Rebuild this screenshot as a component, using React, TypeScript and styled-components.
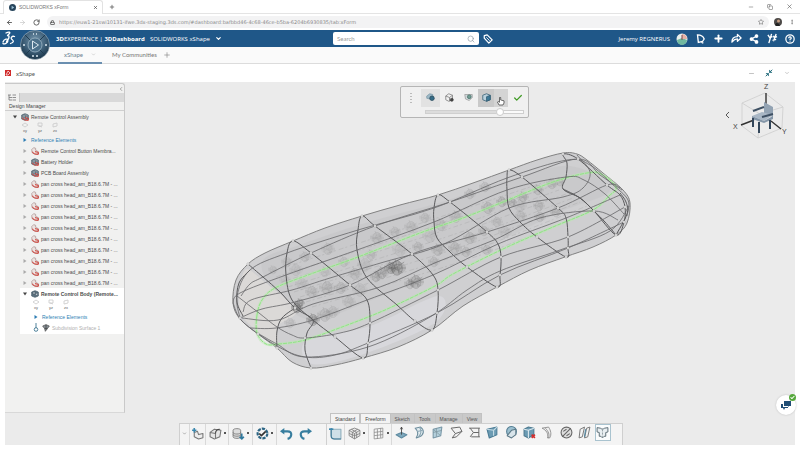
import React from 'react';
import styled, { createGlobalStyle, css } from 'styled-components';
import {
  ArrowLeft, ArrowRight, RotateCw, Lock, X, Plus, Minus, Star, Copy, MoreVertical, ChevronDown,
  ChevronLeft, Search, Share2, CircleHelp, Check, Minimize2,
} from 'lucide-react';

const ui = 'Lato, "Open Sans", sans-serif';
const arial = '"Liberation Sans", Arial, sans-serif';

const Global = createGlobalStyle`
  *, *::before, *::after { box-sizing: border-box; }
  html, body { margin: 0; padding: 0; }
  body { background: #fff; font-family: ${arial}; color: #555; overflow: hidden; }
  button, input { font: inherit; color: inherit; margin: 0; padding: 0; border: 0; background: none; outline: none; }
  svg { display: block; flex: none; }
`;

const Page = styled.div`
  min-height: 100vh;
  display: flex;
  flex-direction: column;
`;

/* ---------- browser frame ---------- */
const TabStrip = styled.div`
  height: 14px;
  display: flex;
  align-items: center;
  background: #fff;
  border-bottom: 1px solid #e4e4e4;
  padding-left: 3px;
`;
const BrowserTab = styled.div`
  width: 100px;
  height: 14px;
  display: flex;
  align-items: center;
  gap: 3px;
  padding: 0 4px 0 5px;
  background: #fff;
  border: 1px solid #e2e2e2;
  border-bottom: 0;
  border-radius: 3px 3px 0 0;
  font-size: 5px;
  color: #777;
`;
const TabTitle = styled.span`
  flex: 1;
  white-space: nowrap;
`;
const IconButton = styled.button<{ $w?: number; $color?: string }>`
  display: flex;
  align-items: center;
  justify-content: center;
  flex: none;
  width: ${p => p.$w ?? 12}px;
  height: 12px;
  color: ${p => p.$color ?? '#555'};
`;
const WindowButtons = styled.div`
  margin-left: auto;
  display: flex;
  gap: 7px;
  padding-right: 5px;
`;
const AddressRow = styled.div`
  height: 16px;
  display: flex;
  align-items: center;
  padding: 0 3px;
  background: #fff;
`;
const AddressBox = styled.label`
  flex: 1;
  height: 12px;
  display: flex;
  align-items: center;
  gap: 4px;
  padding: 0 5px 0 3px;
  margin-left: 4px;
  border-radius: 6px;
  background: #f3f3f4;
  color: #555;
`;
const AddressInput = styled.input`
  flex: 1;
  font-family: "DejaVu Sans", sans-serif;
  font-size: 5px;
  height: 12px;
  color: #8a8a8a;
`;

/* ---------- platform header ---------- */
const Header = styled.header`
  position: relative;
  height: 17px;
  display: grid;
  grid-template-columns: 1fr 146px 1fr;
  align-items: center;
  padding: 0 4px 0 16px;
  background: #1f5788;
  color: #fff;
  font-family: ${ui};
`;
const BrandLogo = styled.div`
  position: absolute;
  left: 2px;
  top: 1px;
`;
const Compass = styled.button`
  position: absolute;
  left: 20px;
  top: 0;
  z-index: 2;
`;
const Brand = styled.div`
  display: flex;
  align-items: center;
  gap: 5px;
  padding-left: 40px;
  font-family: "Open Sans", sans-serif;
  font-size: 6px;
  font-weight: 500;
  white-space: nowrap;
`;
const SearchBox = styled.label`
  height: 13px;
  display: flex;
  align-items: center;
  padding: 0 4px;
  border-radius: 2px;
  background: #fff;
  color: #8d9aa5;
`;
const SearchInput = styled.input`
  flex: 1;
  min-width: 0;
  font-size: 6px;
  &::placeholder { color: #999; opacity: 1; }
`;
const HeaderRight = styled.div`
  display: flex;
  align-items: center;
  padding-left: 3px;
`;
const UserName = styled.span`
  margin-left: auto;
  margin-right: 6px;
  font-family: "Open Sans", sans-serif;
  font-size: 6px;
  font-weight: 500;
  white-space: nowrap;
`;
const HeaderIcons = styled.div`
  display: flex;
  gap: 6px;
`;

const DashTabs = styled.nav`
  height: 17px;
  display: flex;
  align-items: center;
  padding-left: 58px;
  background: #fafafa;
  border-bottom: 1px solid #dcdcdc;
  font-family: ${ui};
  font-size: 6px;
`;
const DashTab = styled.a<{ $active?: boolean }>`
  height: 17px;
  display: flex;
  align-items: center;
  justify-content: space-between;
  width: ${p => (p.$active ? '44px' : 'auto')};
  padding: 0 6px;
  margin-right: ${p => (p.$active ? 4 : 0)}px;
  color: ${p => (p.$active ? '#6b7f90' : '#777')};
  text-decoration: none;
  white-space: nowrap;
  border-bottom: 2px solid ${p => (p.$active ? '#6a8fb0' : 'transparent')};
`;
const WidgetHeader = styled.div`
  height: 18px;
  display: flex;
  align-items: center;
  gap: 5px;
  padding: 0 7px 0 5px;
  font-family: ${ui};
  font-size: 6px;
  color: #555;
`;
const WidgetButtons = styled.div`
  display: flex;
  margin-left: auto;
  gap: 6px;
`;

/* ---------- workspace ---------- */
const Workspace = styled.main`
  position: relative;
  flex: 1;
  margin: 0 5px 5px;
  display: flex;
  flex-direction: column;
  background: #ebebeb;
  min-height: 363px;
`;
const Scene = styled.svg`
  position: absolute;
  inset: 0;
  width: 100%;
  height: 100%;
`;
const Panel = styled.aside`
  position: relative;
  flex: 1;
  width: 120px;
  margin-top: 1px;
  background: #f1f1f0;
  border: 1px solid #c9c9c9;
  border-left: 0;
  border-bottom-color: #d8d8d8;
  border-radius: 0 3px 0 0;
  font-size: 5px;
`;
const PanelTop = styled.div`
  height: 9px;
  display: flex;
  justify-content: flex-end;
  align-items: center;
`;
const PanelTabs = styled.div`
  height: 9px;
  display: flex;
  background: #d9d9d9;
`;
const PanelTab = styled.button`
  width: 15px;
  display: flex;
  align-items: center;
  justify-content: center;
  background: #f1f1f0;
  border-right: 1px solid #c6c6c6;
`;
const PanelTitle = styled.div`
  height: 9px;
  line-height: 8px;
  padding-left: 4px;
  border-bottom: 1px solid #cfcfcf;
  color: #444;
`;
const Tree = styled.div`
  display: flex;
  flex-direction: column;
`;
const Highlight = styled.div`
  margin-left: 15px;
  padding-bottom: 1px;
  background: #fff;
`;
const Row = styled.div<{ $indent: number; $tone?: 'link' | 'muted' | 'strong' }>`
  height: 11px;
  display: flex;
  align-items: center;
  gap: 2px;
  padding-left: ${p => p.$indent}px;
  color: #4c4c4c;
  ${p => p.$tone === 'link' && css`color: #2f7fb4;`}
  ${p => p.$tone === 'muted' && css`color: #b0b0b0;`}
  ${p => p.$tone === 'strong' && css`color: #4c4c4c; font-weight: bold;`}
`;
const Toggle = styled.button`
  width: 8px;
  height: 8px;
  flex: none;
  display: flex;
  align-items: center;
  justify-content: center;
`;
const RowLabel = styled.span`
  white-space: nowrap;
`;
const PlaneRow = styled.div<{ $indent: number }>`
  height: 12px;
  display: flex;
  align-items: center;
  gap: 5px;
  padding-left: ${p => p.$indent}px;
`;

/* ---------- floating view palette ---------- */
const Palette = styled.div`
  position: absolute;
  left: 50%;
  top: 4px;
  width: 129px;
  height: 32px;
  border: 1px solid #b5b5b5;
  border-radius: 2px;
  background: #f0f0f0;
`;
const PaletteRow = styled.div`
  height: 21px;
  display: flex;
  align-items: center;
  padding-left: 5px;
`;
const Grip = styled.span`
  display: flex;
  width: 15px;
`;
const PaletteButton = styled.button<{ $shade?: string; $w?: number }>`
  width: ${p => p.$w ?? 19}px;
  height: 18px;
  flex: none;
  display: flex;
  align-items: center;
  justify-content: center;
  background: ${p => p.$shade ?? 'transparent'};
`;
const Slider = styled.input`
  -webkit-appearance: none;
  appearance: none;
  display: block;
  width: 99px;
  height: 8px;
  margin-left: 24px;
  background: transparent;
  &::-webkit-slider-runnable-track {
    height: 4px;
    border: 1px solid #cfcfcf;
    background: linear-gradient(90deg, #dcdcdc 76%, #fafafa 76%);
  }
  &::-webkit-slider-thumb {
    -webkit-appearance: none;
    width: 8px;
    height: 8px;
    margin-top: -3px;
    border: 1px solid #ccc;
    border-radius: 50%;
    background: #fff;
  }
`;
const Pointer = styled.div`
  position: absolute;
  left: 96px;
  top: 9px;
`;

/* ---------- command dock ---------- */
const Dock = styled.footer`
  position: relative;
  height: 32px;
  padding-left: 174px;
`;
const DockTabs = styled.div`
  height: 10px;
  display: flex;
  padding-left: 151px;
`;
const DockTab = styled.button<{ $light?: boolean }>`
  height: 10px;
  padding: 0 4px;
  font-size: 5px;
  color: ${p => (p.$light ? '#444' : '#555')};
  background: ${p => (p.$light ? '#f3f3f3' : '#c9c9c9')};
  border: 1px solid #c2c2c2;
  border-left-width: ${p => (p.$light ? 1 : 0)}px;
  border-bottom: 0;
  white-space: nowrap;
`;
const DockRow = styled.div`
  height: 22px;
  display: flex;
  width: fit-content;
  padding-right: 10px;
  background: #f4f4f4;
  border: 1px solid #cfcfcf;
  border-bottom: 0;
`;
const Cell = styled.button<{ $w: number; $line?: boolean }>`
  width: ${p => p.$w}px;
  flex: none;
  display: flex;
  align-items: center;
  justify-content: center;
  gap: 2px;
  padding-bottom: 3px;
  border-right: ${p => (p.$line ? '1px solid #d9d9d9' : '0')};
`;
const MenuDot = styled.span`
  width: 2px;
  height: 2px;
  background: #555;
`;
const DockGap = styled.span`
  width: 12px;
  border-right: 1px solid #d0d0d0;
`;
const Commands = styled.div`
  flex: 0 0 220px;
  display: grid;
  grid-template-columns: repeat(12, 1fr);
`;
const Command = styled.button<{ $selected?: boolean }>`
  display: flex;
  align-items: center;
  justify-content: center;
  height: 17px;
  margin: 0 1px;
  border: ${p => (p.$selected ? '1px solid #a9c3cf' : '0')};
  background: ${p => (p.$selected ? '#fafcfd' : 'none')};
`;
const ChatButton = styled.button`
  position: absolute;
  right: -1px;
  bottom: 30px;
  width: 20px;
  height: 20px;
  display: flex;
  align-items: center;
  justify-content: center;
  border-radius: 50%;
  background: #fff;
  box-shadow: 0 0 2px #bbb;
`;
const ChatBadge = styled.span`
  position: absolute;
  right: 0;
  top: -1px;
  width: 7px;
  height: 7px;
  display: flex;
  align-items: center;
  justify-content: center;
  border-radius: 50%;
  background: #56a83c;
  color: #fff;
`;

/* ---------- model geometry ---------- */
type Pt = [number, number];

function spline(pts: Pt[], closed = false): string {
  const n = pts.length;
  const at = (i: number): Pt => (closed ? pts[(i + n) % n] : pts[Math.max(0, Math.min(n - 1, i))]);
  let d = `M${pts[0][0]} ${pts[0][1]}`;
  const last = closed ? n : n - 1;
  for (let i = 0; i < last; i++) {
    const [a, b, c, e] = [at(i - 1), at(i), at(i + 1), at(i + 2)];
    d += `C${b[0] + (c[0] - a[0]) / 6} ${b[1] + (c[1] - a[1]) / 6} ${c[0] - (e[0] - b[0]) / 6} ${c[1] - (e[1] - b[1]) / 6} ${c[0]} ${c[1]}`;
  }
  return closed ? d + 'Z' : d;
}

const outline: Pt[] = [
  [248, 264], [236, 280], [233, 303], [240, 319], [258, 334], [277, 348], [292, 362], [311, 368], [335, 365],
  [363, 358], [398, 347], [432, 330], [463, 306], [497, 287], [530, 270], [565, 257], [593, 247], [616, 235],
  [627, 223], [630, 203], [623, 190], [603, 173], [587, 160], [577, 154], [563, 153], [537, 160], [509, 170],
  [473, 183], [438, 195], [400, 205], [362, 216], [325, 228], [293, 241], [265, 253],
];

const rings: Pt[][] = [
  [[293, 241], [311, 253], [350, 285], [367, 300], [370, 323], [368, 343], [363, 358], [335, 337], [313, 320], [292, 300], [286, 275], [287, 253]],
  [[362, 216], [375, 226], [412, 254], [433, 275], [438, 290], [437, 313], [432, 330], [415, 321], [397, 305], [367, 278], [357, 250], [358, 230]],
  [[438, 195], [450, 202], [487, 232], [498, 244], [501, 257], [500, 275], [497, 287], [467, 267], [450, 252], [437, 238], [434, 222], [434, 208]],
  [[509, 170], [522, 177], [558, 208], [566, 218], [568, 237], [568, 248], [566, 257], [537, 237], [520, 222], [509, 208], [507, 190], [507, 178]],
  [[563, 154], [578, 159], [607, 185], [620, 195], [625, 207], [624, 222], [616, 235], [594, 211], [580, 198], [563, 189], [566, 177], [567, 163]],
];

const lengthwise: Pt[][] = [
  [[240, 318], [237, 296], [250, 270], [287, 253], [358, 230], [434, 208], [507, 178], [567, 160], [590, 165], [612, 184], [628, 200], [627, 216]],
  [[241, 296], [250, 284], [263, 277], [311, 253], [375, 226], [450, 202], [522, 177], [578, 159], [600, 175], [622, 190]],
  [[233, 303], [240, 293], [286, 275], [357, 250], [434, 222], [507, 190], [566, 177], [584, 180], [605, 194], [624, 214]],
  [[243, 312], [251, 300], [292, 290], [330, 278], [384, 262], [444, 244], [509, 208], [563, 197], [583, 188], [590, 172], [577, 155]],
  [[240, 318], [262, 309], [295, 302], [350, 285], [412, 254], [487, 232], [558, 208], [607, 185], [620, 188]],
  [[250, 328], [276, 328], [313, 320], [367, 300], [433, 275], [498, 244], [566, 218], [620, 195]],
  [[237, 296], [259, 313], [277, 327], [292, 335], [305, 338], [340, 333], [370, 323], [438, 290], [501, 257], [568, 237], [625, 207]],
  [[233, 303], [243, 322], [277, 346], [305, 357], [335, 355], [368, 343], [437, 313], [500, 275], [568, 248], [624, 222]],
  [[259, 334], [277, 344], [305, 357], [368, 347], [430, 317], [467, 290], [500, 271], [560, 250], [610, 231], [629, 206]],
  [[242, 318], [278, 320], [313, 304], [380, 287], [437, 262], [494, 240], [540, 218], [594, 211], [618, 220]],
];

const endLoops: Pt[][] = [
  [[248, 264], [263, 277], [280, 292], [295, 308], [313, 320], [307, 333], [305, 350], [311, 368]],
  [[295, 308], [282, 318], [277, 331], [277, 348]],
  [[250, 270], [239, 283], [237, 302], [243, 316]],
  [[563, 189], [580, 198], [594, 211], [605, 222], [616, 235]],
  [[620, 193], [626, 202], [627, 214], [616, 235]],
];

const greenLoop: Pt[] = [
  [257, 315], [257, 333], [266, 344], [279, 344], [305, 340], [342, 327], [385, 310], [435, 286], [453, 274],
  [503, 249], [553, 227], [593, 210], [609, 196], [616, 187], [601, 174], [587, 173], [553, 182], [503, 202],
  [463, 218], [420, 233], [358, 257], [308, 275], [275, 288], [262, 300],
];

const partSpots: [number, number, number, number][] = [
  [273, 270, 5, 0.2], [287, 262, 6, 0.2], [305, 257, 6, 0.25], [328, 249, 7, 0.25], [344, 262, 6, 0.25], [325, 272, 6, 0.2],
  [377, 238, 7, 0.3], [395, 232, 6, 0.25], [411, 227, 7, 0.25], [425, 218, 6, 0.25], [441, 225, 7, 0.3], [456, 217, 7, 0.3],
  [470, 194, 6, 0.3], [485, 187, 6, 0.3], [488, 208, 7, 0.4], [502, 202, 6, 0.45], [512, 202, 5, 0.4], [523, 197, 6, 0.4],
  [538, 190, 6, 0.35], [552, 184, 6, 0.35], [560, 182, 5, 0.3], [539, 206, 6, 0.3], [540, 217, 6, 0.3], [521, 216, 6, 0.25],
  [470, 238, 7, 0.35], [484, 231, 6, 0.3], [455, 248, 7, 0.35], [438, 250, 7, 0.35], [434, 262, 6, 0.3], [418, 247, 6, 0.3],
  [397, 268, 9, 0.9], [391, 268, 7, 0.7], [382, 273, 7, 0.5], [376, 277, 6, 0.4], [416, 282, 8, 0.65], [410, 284, 6, 0.4],
  [297, 308, 6, 0.9], [300, 303, 5, 0.6], [313, 320, 7, 0.7], [325, 315, 8, 0.35], [333, 312, 7, 0.25], [327, 288, 8, 0.35],
  [312, 292, 7, 0.3], [341, 288, 7, 0.3], [355, 274, 7, 0.3], [302, 284, 7, 0.2], [349, 302, 7, 0.25], [371, 255, 6, 0.25],
  [487, 250, 6, 0.3], [497, 222, 6, 0.25], [466, 252, 6, 0.3], [556, 212, 6, 0.3], [290, 323, 6, 0.25], [285, 280, 6, 0.15],
  [400, 250, 8, 0.2], [360, 290, 8, 0.2], [365, 265, 8, 0.2], [430, 236, 8, 0.2], [505, 232, 7, 0.2], [520, 206, 7, 0.2], [296, 270, 7, 0.2],
];

const Model = () => (
  <g fill="none">
    <path d={spline(outline, true)} fill="#cfcfd1" stroke="#777" strokeWidth="0.9" />
    <path d={spline([[262, 262], [300, 245], [362, 224], [438, 203], [509, 180], [570, 166], [610, 190], [560, 212], [498, 242], [433, 275], [367, 302], [313, 320], [280, 300]], true)} fill="#c4c4c6" opacity="0.55" />
    <path d={spline([[245, 270], [262, 280], [296, 310], [278, 326], [276, 344], [245, 320], [239, 300]], true)} fill="#dddbd8" opacity="0.8" />
    <path d={spline([[307, 340], [370, 326], [438, 296], [436, 322], [364, 354], [312, 364]], true)} fill="#d9d9de" opacity="0.8" />
    {partSpots.map(([x, y, r, o], i) => (
      <g key={i} stroke="#555" strokeWidth="0.5" opacity={o * 0.8}>
        <ellipse cx={x} cy={y} rx={r} ry={r * 0.7} fill="#808080" fillOpacity="0.35" stroke="none" />
        <ellipse cx={x} cy={y} rx={r * 0.6} ry={r * 0.8} fill="#808080" fillOpacity="0.3" />
        <ellipse cx={x + 1} cy={y - 1} rx={r * 0.4} ry={r * 0.3} />
        <path d={`M${x - r} ${y - 2}l${r * 1.6} ${r * 0.7}M${x - r * 0.7} ${y + 3}l${r * 1.5} ${-r}M${x - 2} ${y - r}l4 ${r * 1.6}M${x - r} ${y}h${r * 2}M${x + 2} ${y - r * 0.7}v${r * 1.3}`} />
      </g>
    ))}
    <g stroke="#888" strokeWidth="0.5" opacity="0.4">
      {[0, 1, 2, 3, 4, 5, 6, 7].map(i => (
        <path key={i} d={spline([[270 + i * 6, 272 + i * 5], [350 + i * 7, 246 + i * 5], [440 + i * 7, 217 + i * 5], [545 + i * 7, 182 + i * 4]])} strokeDasharray="5 2 2 3" />
      ))}
    </g>
    <path d={spline(greenLoop, true)} stroke="#b9ecb0" strokeWidth="3" opacity="0.5" />
    <path d={spline(greenLoop, true)} stroke="#8fe584" strokeWidth="1" strokeDasharray="4 1" />
    <g stroke="#58585a" strokeWidth="1">
      {rings.map((r, i) => <path key={i} d={spline(r, true)} />)}
      {endLoops.map((r, i) => <path key={i} d={spline(r)} />)}
    </g>
    <g stroke="#666668" strokeWidth="0.8">
      {lengthwise.map((r, i) => <path key={i} d={spline(r)} />)}
    </g>
    <g fill="#f4f4f4" stroke="#888" strokeWidth="0.4">
      {rings.flatMap(r => [0, 1, 2, 4, 5, 6, 7].map(k => r[k])).concat([[248, 264], [311, 368], [277, 348], [240, 318], [258, 334], [305, 338], [295, 308]])
        .map(([x, y], i) => <circle key={i} cx={x} cy={y} r="1.2" />)}
    </g>
  </g>
);

const ViewCube = () => (
  <g fill="none">
    <path d="M742 103L765 93L783 107L782 128L758 138L742 126ZM742 103L760 114L783 107M760 114L758 138" stroke="#cdcdcd" strokeWidth="0.8" />
    <path d="M766 93V104M741 125L754 120M771 121L781 129" stroke="#333" strokeWidth="1.4" />
    <path d="M764 102l9 5v10l-9-4z" fill="#93a3b3" />
    <path d="M752 116l10-4 11 3-9 6z" fill="#a9b7c5" />
    <path d="M752 116l12 5 9-5v3l-9 4-12-4z" fill="#8496a8" />
    <path d="M753 111l11-4M762 117l11-3" stroke="#3e5063" strokeWidth="2" />
    <path d="M753 118v9M759 122v11M770 120v9" stroke="#33465a" strokeWidth="2" />
    <g fill="#444" fontFamily={arial} fontSize="7">
      <text x="764" y="89">Z</text>
      <text x="733" y="129">X</text>
      <text x="782" y="134">Y</text>
    </g>
    <path d="M729 112l-3 3 3 3" stroke="#555" strokeWidth="1" />
  </g>
);

/* ---------- small icons ---------- */
const S = ({ children, s = 13 }: { children: React.ReactNode; s?: number }) => (
  <svg width={s} height={s} viewBox="0 0 12 12" fill="none" stroke="#6d7478" strokeWidth="1" strokeLinejoin="round" aria-hidden="true">{children}</svg>
);

const PartIcon = ({ assembly, body }: { assembly?: boolean; body?: boolean }) => (
  <S s={8}>
    {assembly || body
      ? <><path d="M1 3l5-2 5 2v6l-5 2-5-2z" fill={body ? '#5d7280' : '#8d9aa2'} stroke="#3f5462" /><path d="M3 3h3v3H3zM7 5h3v3H7z" fill="#dfe6ea" stroke="#4a5c68" /></>
      : <path d="M1 4l3-3 3 1v3l4 2v3l-4 1-5-2z" fill="#ece3e1" stroke="#a58a86" />}
    {!body && <path d="M2 7c1 3 4 4 9 4V8L6 7" stroke="#cf3b33" strokeWidth="1.5" />}
  </S>
);

const Arrow = ({ open, color = '#aaa' }: { open?: boolean; color?: string }) => (
  <svg width="4" height="4" viewBox="0 0 4 4" aria-hidden="true"><path d={open ? 'M0 0.5h4L2 3.5z' : 'M0.5 0v4L3.5 2z'} fill={color} /></svg>
);

const Planes = ({ indent }: { indent: number }) => (
  <PlaneRow $indent={indent}>
    {['xy', 'yz', 'zx'].map((n, i) => (
      <svg key={n} width="10" height="12" viewBox="0 0 10 12" fill="none" stroke="#c9c9c9" strokeWidth="0.8" aria-label={n}>
        <path d={i === 0 ? 'M2 3l3-2 3 2-3 2z' : i === 1 ? 'M3 1h4v3H3zM4 4l3 1' : 'M3 2l4-1v3l-4 1z'} />
        <text x="3" y="10" fontSize="4" fill="#666" stroke="none" fontFamily={arial}>{n}</text>
      </svg>
    ))}
  </PlaneRow>
);

const steel = '#7fa9bd';
const commandIcons: { name: string; art: React.ReactNode }[] = [
  { name: 'Plane', art: <><path d="M1 8l5-2 5 2-5 3z" fill={steel} stroke="#5f8ba1" /><path d="M6 8V1M5 3l1-2 1 2" stroke="#444" strokeWidth="0.8" /></> },
  { name: 'Extrude', art: <><path d="M2 2l5-1c4 3 3 7-1 9l-3 1c2-3 2-6-1-9z" fill="#e3edf1" stroke="#6d8d9d" /><path d="M6 1c2 3 2 6-1 9M4 5l5-1" stroke="#8ba6b3" /></> },
  { name: 'Surface', art: <><path d="M2 3l8-2-1 8-7 2z" fill="#b4d0dc" stroke="#7a98a8" /><path d="M2 6l8-2M5 2v8M2 3l7 6" stroke="#7f959f" strokeWidth="0.7" /></> },
  { name: 'Bend', art: <path d="M1 2l8-1 2 4-5 5-4 1 3-4zM5 7l6-2" fill="#f2f2f2" stroke="#666" strokeWidth="0.9" /> },
  { name: 'Bridge', art: <path d="M1 2h10M3 10h8M2 2l3 4-3 4M5 6h5M10 2v8" stroke="#666" strokeWidth="0.9" /> },
  { name: 'Thicken', art: <><path d="M1 3l9-2v7l-7 3z" fill="#6b9bb3" stroke="#4b7c95" /><path d="M1 3l6 1v5M10 1L7 4" stroke="#c5dbe5" /></> },
  { name: 'Round', art: <><circle cx="6" cy="5" r="4.5" fill="#9cc0d0" stroke="#557f94" /><path d="M6 4l4-1v5l-4 3-4-2z" fill="#d8e4ea" stroke="#5d7987" /></> },
  { name: 'Delete face', art: <><path d="M1 3l4-2 5 1v6l-5 3-4-2z" fill="#6b9bb3" stroke="#4d7a90" /><path d="M1 3l4 1 5-2M5 4v7" stroke="#dbe8ee" /><path d="M8 8l3 3M11 8l-3 3" stroke="#d22c2c" strokeWidth="1.5" /></> },
  { name: 'Crease', art: <path d="M1 2l6-1c2 3 3 7 1 10H6C7 7 5 4 1 2zM4 2c3 3 4 6 3 9" fill="#f0f0f0" stroke="#888" strokeWidth="0.8" /> },
  { name: 'No crease', art: <><circle cx="6" cy="6" r="5" fill="#dedede" stroke="#666" /><path d="M2 10l8-8M3 5l3-2M6 9l3-2" stroke="#666" /></> },
  { name: 'Flatten', art: <><path d="M2 3l4-2-2 9-3 1zM8 2l3-1-2 9-3 1z" fill="#f3f3f3" stroke="#777" strokeWidth="0.9" /><path d="M7 3L6 10" stroke="#4f87a3" /></> },
  { name: 'Symmetry', art: <><path d="M1 1.500L4 2c1 1 3 1 4 0l3-.5v4L9 6v3.500H7.500L6 11 4.500 9.500H3V6l-2-.5z" fill="#e8eef1" stroke="#5c6c74" strokeWidth="0.9" /><path d="M6 3v7" stroke="#8a979d" strokeWidth="0.8" strokeDasharray="2 1" /></> },
];

const tree: { label: string; assembly?: boolean }[] = [
  { label: 'Remote Control Button Membra...' },
  { label: 'Battery Holder', assembly: true },
  { label: 'PCB Board Assembly', assembly: true },
  ...Array.from({ length: 10 }, () => ({ label: 'pan cross head_am_B18.6.7M - ...' })),
];

export default function App() {
  return (
    <Page>
      <Global />
      <TabStrip>
        <BrowserTab>
          <svg width="7" height="7" viewBox="0 0 8 8"><circle cx="4" cy="4" r="4" fill="#27455c" /><path d="M3 2l3 2-3 2z" fill="#9fc3d8" /></svg>
          <TabTitle>SOLIDWORKS xForm</TabTitle>
          <X size={5} color="#444" strokeWidth={3} />
        </BrowserTab>
        <IconButton aria-label="New tab" $w={18}><Plus size={6} strokeWidth={3} /></IconButton>
        <WindowButtons>
          <IconButton aria-label="Minimize"><Minus size={6} /></IconButton>
          <IconButton aria-label="Restore"><Copy size={6} /></IconButton>
          <IconButton aria-label="Close"><X size={7} /></IconButton>
        </WindowButtons>
      </TabStrip>
      <AddressRow>
        <IconButton aria-label="Back" $w={13}><ArrowLeft size={7} strokeWidth={3} /></IconButton>
        <IconButton aria-label="Forward" $w={13} $color="#bbb"><ArrowRight size={7} /></IconButton>
        <IconButton aria-label="Reload" $w={14}><RotateCw size={7} strokeWidth={3} /></IconButton>
        <AddressBox>
          <Lock size={5} strokeWidth={4} />
          <AddressInput aria-label="Address" defaultValue="https://euw1-21swi10131-ifwe.3dx-staging.3ds.com/#dashboard:bafbbd46-4c68-46ce-b5ba-6204b6930835/tab:xForm" />
          <Star size={6} />
        </AddressBox>
        <IconButton aria-label="Profile" $w={18}>
          <svg width="8" height="8" viewBox="0 0 8 8"><circle cx="4" cy="4" r="4" fill="#4d4a48" /><circle cx="4.5" cy="3" r="1.5" fill="#c79e82" /><path d="M1 7c1-3 3-2 4-1l1 2H2z" fill="#222" /></svg>
        </IconButton>
        <IconButton aria-label="Menu" $w={10}><MoreVertical size={6} /></IconButton>
      </AddressRow>

      <Header>
        <BrandLogo>
          <svg width="14" height="15" viewBox="0 0 14 15" fill="none" stroke="#fff" strokeWidth="1.3" strokeLinecap="round" strokeLinejoin="round" aria-label="3DS">
            <path d="M4 2c3-1.500 5-1 3 1L5.500 4.500c3 0 1 4-1 6M1 11c1-3 5-4 5-1.500S2 13.500 1 12.500" />
            <path d="M12.500 5.500C10 4.500 8 7 10 8.500s2 3-1.500 4" />
          </svg>
        </BrandLogo>
        <Compass aria-label="Compass">
          <svg width="30" height="30" viewBox="0 0 30 30">
            <defs><radialGradient id="ball" cx="0.5" cy="0.35" r="0.65"><stop offset="0" stopColor="#7898ae" /><stop offset="0.6" stopColor="#3c5d76" /><stop offset="1" stopColor="#193448" /></radialGradient></defs>
            <circle cx="15" cy="15" r="14.500" fill="url(#ball)" stroke="#b9c7d0" strokeWidth="0.5" />
            <path d="M5 5l20 20M25 5L5 25" stroke="#203c50" strokeWidth="1" />
            <circle cx="15" cy="15" r="7" fill="#4b708a" stroke="#9cb4c3" strokeWidth="0.8" />
            <path d="M12.500 11v8l6-4z" fill="none" stroke="#dbe8f0" strokeWidth="1" />
            <path d="M13 4h1M16 4h1M4 14v2M26 14v2M12 26h2M16 26h2" stroke="#dce8ef" strokeWidth="1.500" />
          </svg>
        </Compass>
        <Brand>
          <span><b>3D</b>EXPERIENCE | <b>3DDashboard</b></span>
          <span>SOLIDWORKS xShape</span>
          <ChevronDown size={7} strokeWidth={4} />
        </Brand>
        <SearchBox>
          <SearchInput placeholder="Search" aria-label="Search" />
          <Search size={8} />
        </SearchBox>
        <HeaderRight>
          <IconButton aria-label="Tags" $color="#fff">
            <svg width="10" height="10" viewBox="0 0 12 12" fill="none" stroke="#fff" strokeWidth="1.500" strokeLinejoin="round"><path d="M1.500 2L5 1l6 6-4 4-5.500-6z" /><path d="M4 4l4 4" strokeWidth="1" /></svg>
          </IconButton>
          <UserName>Jeremy REGNERUS</UserName>
          <HeaderIcons>
            <IconButton aria-label="Account">
              <svg width="12" height="12" viewBox="0 0 12 12"><circle cx="6" cy="6" r="5.500" fill="#e9efed" /><path d="M1 7a5 5 0 0 0 10 0L6 5z" fill="#71b9a0" /><path d="M6 1a5 5 0 0 1 5 5H6z" fill="#e5b1a6" /><path d="M6 2v5" stroke="#7a4a4a" /></svg>
            </IconButton>
            <IconButton aria-label="Notifications" $color="#fff"><svg width="10" height="10" viewBox="0 0 12 12" fill="none" stroke="#fff" strokeWidth="1.600"><path d="M3 1l1 9 5-1 2-3c-1-3-4-5-8-5zM8 10l2 1" /></svg></IconButton>
            <IconButton aria-label="Add" $color="#fff"><Plus size={11} strokeWidth={4} /></IconButton>
            <IconButton aria-label="Share" $color="#fff"><svg width="11" height="11" viewBox="0 0 12 12" fill="none" stroke="#fff" strokeWidth="1.400" strokeLinejoin="round"><path d="M1 10c0-4 2-6 6-6V1.500L11 5.500 7 9V6.500c-3 0-4 1-6 3.500z" /></svg></IconButton>
            <IconButton aria-label="Network" $color="#fff"><Share2 size={10} strokeWidth={3} fill="#fff" /></IconButton>
            <IconButton aria-label="Tools" $color="#fff"><svg width="11" height="11" viewBox="0 0 12 12" fill="none" stroke="#fff" strokeWidth="1.500"><path d="M1 2l2 3 3-1M5 1L2 11M7 3l1 2 3-1M10 1L7 9M6 8l4-1" /></svg></IconButton>
            <IconButton aria-label="Help" $color="#fff"><CircleHelp size={10} strokeWidth={3} /></IconButton>
          </HeaderIcons>
        </HeaderRight>
      </Header>

      <DashTabs>
        <DashTab href="#xshape" $active>xShape <ChevronDown size={5} color="#aaa" /></DashTab>
        <DashTab href="#communities">My Communities</DashTab>
        <IconButton aria-label="Add tab" $color="#888" $w={8}><Plus size={8} /></IconButton>
      </DashTabs>

      <WidgetHeader>
        <svg width="6" height="6" viewBox="0 0 6 6"><path d="M0 0h6v6H0z" fill="#d02a2a" /><path d="M1 5l2-4 2 2-2 2z" stroke="#fff" fill="none" strokeWidth="0.7" /></svg>
        <span>xShape</span>
        <WidgetButtons>
          <IconButton aria-label="Collapse" $color="#999"><Minus size={7} /></IconButton>
          <IconButton aria-label="Restore size" $color="#2b7180"><Minimize2 size={8} strokeWidth={3} /></IconButton>
          <IconButton aria-label="Options" $color="#999"><ChevronDown size={6} /></IconButton>
        </WidgetButtons>
      </WidgetHeader>

      <Workspace>
        <Scene viewBox="5 82 790 363" aria-label="Remote control model"><Model /><ViewCube /></Scene>

        <Panel>
          <PanelTop><IconButton aria-label="Hide panel" $w={6}><ChevronLeft size={6} /></IconButton></PanelTop>
          <PanelTabs>
            <PanelTab aria-label="Design tree">
              <svg width="8" height="7" viewBox="0 0 8 7" fill="none" stroke="#777" strokeWidth="0.8"><path d="M0 1h3M1 1v5h3M1 3.500h3M4.500 1H8M4.500 3.500H8M4.500 6H8" /></svg>
            </PanelTab>
          </PanelTabs>
          <PanelTitle>Design Manager</PanelTitle>
          <Tree>
            <Row $indent={6}>
              <Toggle aria-label="Collapse"><Arrow open color="#444" /></Toggle><PartIcon assembly /><RowLabel>Remote Control Assembly</RowLabel>
            </Row>
            <Planes indent={15} />
            <Row $indent={16} $tone="link"><Toggle aria-label="Expand"><Arrow color="#2d7db3" /></Toggle><RowLabel>Reference Elements</RowLabel></Row>
            {tree.map((t, i) => (
              <Row key={i} $indent={16}><Toggle aria-label="Expand"><Arrow /></Toggle><PartIcon assembly={t.assembly} /><RowLabel>{t.label}</RowLabel></Row>
            ))}
            <Highlight>
              <Row $indent={1} $tone="strong"><Toggle aria-label="Collapse"><Arrow open color="#444" /></Toggle><PartIcon body /><RowLabel>Remote Control Body (Remote...</RowLabel></Row>
              <Planes indent={11} />
              <Row $indent={12} $tone="link"><Toggle aria-label="Expand"><Arrow color="#2d7db3" /></Toggle><RowLabel>Reference Elements</RowLabel></Row>
              <Row $indent={12} $tone="muted">
                <svg width="8" height="9" viewBox="0 0 8 9" fill="none" stroke="#3c7590" strokeWidth="0.9"><path d="M4 0v5" /><circle cx="4" cy="6.500" r="1.800" /></svg>
                <S s={8}><path d="M1 3l5-2 5 2-3 4-3 4-1-4z" fill="#899298" stroke="#444" /><path d="M4 7h4M6 1v6" stroke="#333" /></S>
                <RowLabel>Subdivision Surface 1</RowLabel>
              </Row>
            </Highlight>
          </Tree>
        </Panel>

        <Palette>
          <PaletteRow>
            <Grip><svg width="10" height="10" viewBox="0 0 10 10" fill="#bbb"><path d="M4 0h2v1H4zM4 3h2v1H4zM4 6h2v1H4zM4 9h2v1H4z" /></svg></Grip>
            <PaletteButton aria-label="Shaded" $shade="#e2e2e2"><S s={9}><path d="M1 4l4-3 4 1v4L5 8 1 7z" fill="#9db8c6" stroke="#7d9aa8" /><circle cx="8" cy="7" r="3" fill="#356c87" stroke="#28495b" /></S></PaletteButton>
            <PaletteButton aria-label="Wireframe"><S s={9}><path d="M1 4l4-3 5 2v6l-5 2-4-2zM1 4l5 2 4-3M6 6v5" stroke="#777" /><circle cx="9" cy="9" r="2" fill="#444" stroke="#444" /></S></PaletteButton>
            <PaletteButton aria-label="Hide edges"><S s={9}><path d="M1 2h10v4L7 10 2 8z" fill="#d2dadd" stroke="#999" /><circle cx="7" cy="5" r="2.500" fill="#719c92" stroke="#466e66" /></S></PaletteButton>
            <PaletteButton aria-label="Box mode" $shade="#c9c9c9" $w={16}><S s={9}><path d="M1 3l5-2 5 2v6l-5 2-5-2z" fill="#b9d0dc" stroke="#315b70" /><path d="M6 5l5-2v6l-5 2z" fill="#3d7896" stroke="#315b70" /></S></PaletteButton>
            <PaletteButton aria-label="More modes" $shade="#d4d4d4" $w={14} />
            <PaletteButton aria-label="Accept"><Check size={10} color="#3f9a24" strokeWidth={3} /></PaletteButton>
          </PaletteRow>
          <Slider type="range" min={0} max={100} defaultValue={79} aria-label="Subdivision level" />
          <Pointer>
            <svg width="8" height="10" viewBox="0 0 8 10"><path d="M2 9L0.500 6l1-.5 1 .8V1.500h1.200V4l3.300.8V7L6 9z" fill="#fff" stroke="#333" strokeWidth="0.7" /></svg>
          </Pointer>
        </Palette>

        <Dock>
          <DockTabs>
            <DockTab $light>Standard</DockTab><DockTab $light>Freeform</DockTab>
            <DockTab>Sketch</DockTab><DockTab>Tools</DockTab><DockTab>Manage</DockTab><DockTab>View</DockTab>
          </DockTabs>
          <DockRow>
            <Cell $w={10} $line aria-label="Collapse toolbar"><ChevronDown size={5} /></Cell>
            <Cell $w={16} $line aria-label="New part"><S><path d="M3 5l3-1 1 3 4-1v4l-4 1-4-2z" fill="#eee" stroke="#777" /><path d="M1 3h4M3 1v4" stroke="#3c88ae" strokeWidth="1.5" /></S></Cell>
            <Cell $w={23} $line aria-label="Open"><S><path d="M1 5l4-3 6 1-1 6-5 2-4-2zM1 5l5 1v5" fill="#e6e6e6" stroke="#777" /><path d="M6 6c0-3 2-4 4-4" stroke="#444" /></S><MenuDot /></Cell>
            <Cell $w={24} $line aria-label="Save"><S><path d="M1 3v6c0 2 7 2 7 0V3c0-2-7-2-7 0zM1 5c0 2 7 2 7 0M1 7c0 2 7 2 7 0" fill="#ddd" stroke="#777" strokeWidth="0.8" /><path d="M9 6v5M7 9l2 2 2-2" stroke="#2f789d" strokeWidth="1.5" /></S><MenuDot /></Cell>
            <Cell $w={24} $line aria-label="Update"><S><circle cx="6" cy="6" r="4.5" stroke="#2c6584" strokeWidth="2" strokeDasharray="3 1" /><path d="M3 6l2 2 4-4" stroke="#333" strokeWidth="1.5" /></S><MenuDot /></Cell>
            <Cell $w={18} aria-label="Undo"><S><path d="M3 4h4c5 0 4 6 0 7" stroke="#377d9e" strokeWidth="2" /><path d="M4 1v6L0 4z" fill="#377d9e" stroke="none" /></S></Cell>
            <Cell $w={20} aria-label="Redo"><S><path d="M9 4H5c-5 0-4 6 0 7" stroke="#377d9e" strokeWidth="2" /><path d="M8 1v6l4-3z" fill="#377d9e" stroke="none" /></S></Cell>
            <DockGap />
            <Cell $w={18} $line aria-label="Sketch"><S><path d="M2 2h9v9H5c-2 0-3-1-3-3z" fill="#cfe0e8" stroke="#8faebc" /><path d="M2 1v7c0 2 1 3 3 3h6" stroke="#3c7896" /><path d="M0 2h4" stroke="#3c88ae" strokeWidth="1.5" /></S></Cell>
            <Cell $w={24} $line aria-label="Box"><S><path d="M1 3l5-2 5 2v5l-5 3-5-3zM1 3l5 3 5-3M6 6v5M3 2l5 3v5M9 2L4 5v5M1 6l5 2 5-2" fill="#e7e7e7" stroke="#777" strokeWidth="0.7" /></S><MenuDot /></Cell>
            <Cell $w={23} $line aria-label="Grid"><S><path d="M2 2l8-1v9l-8 1zM5 2v9M8 1v9M2 5l8-1M2 8l8-1" fill="#f5f5f5" stroke="#888" strokeWidth="0.7" /></S><MenuDot /></Cell>
            <Commands>
              {commandIcons.map((c, i) => <Command key={c.name} aria-label={c.name} $selected={i === 11}><S>{c.art}</S></Command>)}
            </Commands>
          </DockRow>
          <ChatButton aria-label="Chat">
            <svg width="10" height="9" viewBox="0 0 10 9" fill="#1f4d75"><path d="M3 0h7v5H8L7 6V5H3zM0 3h2v3h5v1H4L3 9 2 7H0z" /></svg>
            <ChatBadge><Check size={5} strokeWidth={5} /></ChatBadge>
          </ChatButton>
        </Dock>
      </Workspace>
    </Page>
  );
}
